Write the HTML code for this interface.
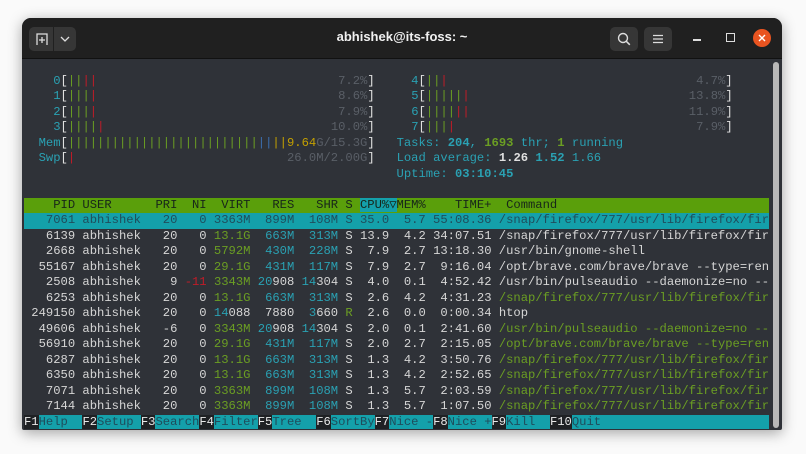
<!DOCTYPE html>
<html><head><meta charset="utf-8">
<style>
html,body{margin:0;padding:0;background:#fafafa;width:806px;height:454px;overflow:hidden}
.win{position:absolute;left:22px;top:18px;width:760px;height:412px;background:#2f3238;border-radius:9px 9px 2px 2px;box-shadow:0 3px 14px rgba(0,0,0,.35);overflow:hidden}
.tb{position:absolute;left:0;top:0;width:760px;height:40px;background:#202020;border-bottom:1px solid #111}
.btn{position:absolute;top:9px;height:24px;background:#363636;border-radius:5px}
.title{position:absolute;left:0;width:760px;top:11px;text-align:center;color:#f0f0f0;font:bold 13px "Liberation Sans",sans-serif}
.term{position:absolute;left:2px;top:40px;font-family:"Liberation Mono","DejaVu Sans Mono",monospace;font-size:12.18px;color:#d6d6d6}
.l{height:15.5px;line-height:15.5px;white-space:pre;width:102ch}
.c{color:#2aa1b3}.g{color:#6b9e23}.r{color:#c01c28}.d{color:#5a5f67}.y{color:#c4a000}.b{color:#3b6fb0}.w{color:#e0e0e0}
.bo{font-weight:bold}
.hd{background:#5a9f0b;color:#18261a}
.hc{background:#14a0aa}
.sel{background:#14a0aa;color:#1f4d5c}
.fk{color:#e8e8e8;background:#1f2124}
.fl{background:#14a0aa;color:#1f4d5c}
.tri{display:inline-block;width:1ch;text-align:center;overflow:hidden;vertical-align:top}
.sb{position:absolute;left:751px;top:44px;width:6px;height:366px;background:#b8b8b8;border-radius:3px}
</style></head><body>
<div class="win">
 <div class="tb">
  <div class="btn" style="left:7px;width:47px"></div>
  <div style="position:absolute;left:31px;top:9px;width:1px;height:24px;background:#202020"></div>
  <svg style="position:absolute;left:13px;top:14px" width="14" height="14" viewBox="0 0 14 14"><path d="M2 13V2h10v11" fill="none" stroke="#ddd" stroke-width="1.3"/><path d="M7 5v6M4 8h6" stroke="#ddd" stroke-width="1.3"/></svg>
  <svg style="position:absolute;left:38px;top:17px" width="10" height="8" viewBox="0 0 10 8"><path d="M1 2l4 4 4-4" fill="none" stroke="#ddd" stroke-width="1.3"/></svg>
  <div class="title">abhishek@its-foss: ~</div>
  <div class="btn" style="left:588px;width:28px"></div>
  <svg style="position:absolute;left:595px;top:14px" width="14" height="14" viewBox="0 0 14 14"><circle cx="6" cy="6" r="4.5" fill="none" stroke="#ddd" stroke-width="1.4"/><path d="M9.3 9.3l3.5 3.5" stroke="#ddd" stroke-width="1.5"/></svg>
  <div class="btn" style="left:622px;width:28px"></div>
  <svg style="position:absolute;left:630px;top:15px" width="12" height="12" viewBox="0 0 12 12"><path d="M1 2.5h10M1 6h10M1 9.5h10" stroke="#ddd" stroke-width="1.2"/></svg>
  <div style="position:absolute;left:671px;top:21px;width:8px;height:1.5px;background:#ddd"></div>
  <div style="position:absolute;left:704px;top:15px;width:7px;height:7px;border:1.3px solid #ddd"></div>
  <div style="position:absolute;left:731px;top:11px;width:18px;height:18px;border-radius:50%;background:#e95420"></div>
  <svg style="position:absolute;left:736px;top:16px" width="8" height="8" viewBox="0 0 8 8"><path d="M1 1l6 6M7 1l-6 6" stroke="#fff" stroke-width="1.4"/></svg>
 </div>
 <div class="sb"></div>
 <div class="term">
<div class="l"> </div>
<div class="l">    <span class="c">0</span><span class="w">[</span><span class="g">||</span><span class="r">||</span>                                 <span class="d">7.2%</span><span class="w">]</span>     <span class="c">4</span><span class="w">[</span><span class="g">||</span><span class="r">|</span>                                  <span class="d">4.7%</span><span class="w">]</span></div>
<div class="l">    <span class="c">1</span><span class="w">[</span><span class="g">|||</span><span class="r">|</span>                                 <span class="d">8.6%</span><span class="w">]</span>     <span class="c">5</span><span class="w">[</span><span class="g">|||||</span><span class="r">|</span>                              <span class="d">13.8%</span><span class="w">]</span></div>
<div class="l">    <span class="c">2</span><span class="w">[</span><span class="g">|||</span><span class="r">|</span>                                 <span class="d">7.9%</span><span class="w">]</span>     <span class="c">6</span><span class="w">[</span><span class="g">||||</span><span class="r">||</span>                              <span class="d">11.9%</span><span class="w">]</span></div>
<div class="l">    <span class="c">3</span><span class="w">[</span><span class="g">||||</span><span class="r">|</span>                               <span class="d">10.0%</span><span class="w">]</span>     <span class="c">7</span><span class="w">[</span><span class="g">|||</span><span class="r">|</span>                                 <span class="d">7.9%</span><span class="w">]</span></div>
<div class="l">  <span class="c">Mem</span><span class="w">[</span><span class="g">||||||||||||||||||||||||||</span><span class="b">||</span><span class="y">||9.64</span><span class="d">G/15.3G</span><span class="w">]</span>   <span class="c">Tasks: <b>204</b>, </span><span class="g bo">1693</span><span class="c"> thr; </span><span class="g bo">1</span><span class="c"> running</span></div>
<div class="l">  <span class="c">Swp</span><span class="w">[</span><span class="r">|</span>                             <span class="d">26.0M/2.00G</span><span class="w">]</span>   <span class="c">Load average: </span><span class="w bo">1.26</span><span class="c bo"> 1.52</span><span class="c"> 1.66</span></div>
<div class="l">                                                   <span class="c">Uptime: <b>03:10:45</b></span></div>
<div class="l"> </div>
<div class="l hd">    PID USER      PRI  NI  VIRT   RES   SHR S <span class="hc">CPU%<span class="tri">▽</span></span>MEM%    TIME+  Command                                     </div>
<div class="l sel">   7061 abhishek   20   0 3363M  899M  108M S 35.0  5.7 55:08.36 /snap/firefox/777/usr/lib/firefox/fir</div>
<div class="l">   6139 abhishek   20   0 <span class="g">13.1G</span>  <span class="c">663M</span>  <span class="c">313M</span> S 13.9  4.2 34:07.51 /snap/firefox/777/usr/lib/firefox/fir</div>
<div class="l">   2668 abhishek   20   0 <span class="g">5792M</span>  <span class="c">430M</span>  <span class="c">228M</span> S  7.9  2.7 13:18.30 /usr/bin/gnome-shell</div>
<div class="l">  55167 abhishek   20   0 <span class="g">29.1G</span>  <span class="c">431M</span>  <span class="c">117M</span> S  7.9  2.7  9:16.04 /opt/brave.com/brave/brave --type=ren</div>
<div class="l">   2508 abhishek    9 <span class="r">-11</span> <span class="g">3343M</span> <span class="c">20</span>908 <span class="c">14</span>304 S  4.0  0.1  4:52.42 /usr/bin/pulseaudio --daemonize=no --</div>
<div class="l">   6253 abhishek   20   0 <span class="g">13.1G</span>  <span class="c">663M</span>  <span class="c">313M</span> S  2.6  4.2  4:31.23 <span class="g">/snap/firefox/777/usr/lib/firefox/fir</span></div>
<div class="l"> 249150 abhishek   20   0 <span class="c">14</span>088  7880  <span class="c">3</span>660 <span class="g">R</span>  2.6  0.0  0:00.34 htop</div>
<div class="l">  49606 abhishek   -6   0 <span class="g">3343M</span> <span class="c">20</span>908 <span class="c">14</span>304 S  2.0  0.1  2:41.60 <span class="g">/usr/bin/pulseaudio --daemonize=no --</span></div>
<div class="l">  56910 abhishek   20   0 <span class="g">29.1G</span>  <span class="c">431M</span>  <span class="c">117M</span> S  2.0  2.7  2:15.05 <span class="g">/opt/brave.com/brave/brave --type=ren</span></div>
<div class="l">   6287 abhishek   20   0 <span class="g">13.1G</span>  <span class="c">663M</span>  <span class="c">313M</span> S  1.3  4.2  3:50.76 <span class="g">/snap/firefox/777/usr/lib/firefox/fir</span></div>
<div class="l">   6350 abhishek   20   0 <span class="g">13.1G</span>  <span class="c">663M</span>  <span class="c">313M</span> S  1.3  4.2  2:52.65 <span class="g">/snap/firefox/777/usr/lib/firefox/fir</span></div>
<div class="l">   7071 abhishek   20   0 <span class="g">3363M</span>  <span class="c">899M</span>  <span class="c">108M</span> S  1.3  5.7  2:03.59 <span class="g">/snap/firefox/777/usr/lib/firefox/fir</span></div>
<div class="l">   7144 abhishek   20   0 <span class="g">3363M</span>  <span class="c">899M</span>  <span class="c">108M</span> S  1.3  5.7  1:07.50 <span class="g">/snap/firefox/777/usr/lib/firefox/fir</span></div>
<div class="l"><span class="fk">F1</span><span class="fl">Help  </span><span class="fk">F2</span><span class="fl">Setup </span><span class="fk">F3</span><span class="fl">Search</span><span class="fk">F4</span><span class="fl">Filter</span><span class="fk">F5</span><span class="fl">Tree  </span><span class="fk">F6</span><span class="fl">SortBy</span><span class="fk">F7</span><span class="fl">Nice -</span><span class="fk">F8</span><span class="fl">Nice +</span><span class="fk">F9</span><span class="fl">Kill  </span><span class="fk">F10</span><span class="fl">Quit                       </span></div>
 </div>
</div>
</body></html>
